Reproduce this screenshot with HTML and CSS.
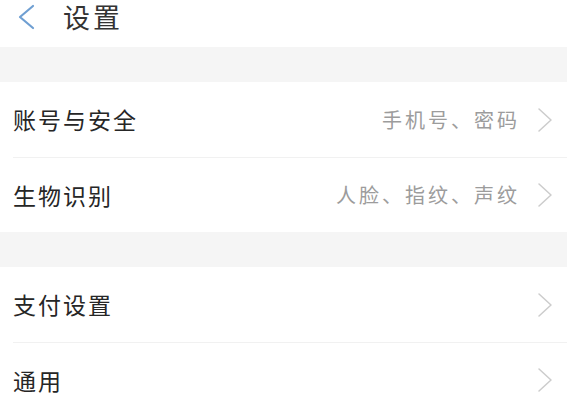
FILE: index.html
```html
<!DOCTYPE html>
<html lang="zh-CN">
<head>
<meta charset="utf-8">
<title>设置</title>
<link rel="stylesheet" href="styles.css">
</head>
<body>
<div class="page">
  <header class="header">
    <svg class="back" width="20" height="26" viewBox="0 0 20 26" aria-hidden="true">
      <path d="M17 2 L4 13 L17 24" fill="none" stroke="#6f9fd2" stroke-width="2.2" stroke-linecap="round" stroke-linejoin="round"/>
    </svg>
    <h1 class="title">设置</h1>
  </header>
  <div class="gap"></div>
  <section class="group">
    <div class="row">
      <span class="label">账号与安全</span>
      <span class="value">手机号、密码</span>
      <svg class="chev" width="16" height="26" viewBox="0 0 16 26" aria-hidden="true"><path d="M2 2 L14 13 L2 24" fill="none" stroke="#cccccc" stroke-width="1.5" stroke-linecap="round" stroke-linejoin="round"/></svg>
    </div>
    <div class="row">
      <span class="label">生物识别</span>
      <span class="value">人脸、指纹、声纹</span>
      <svg class="chev" width="16" height="26" viewBox="0 0 16 26" aria-hidden="true"><path d="M2 2 L14 13 L2 24" fill="none" stroke="#cccccc" stroke-width="1.5" stroke-linecap="round" stroke-linejoin="round"/></svg>
    </div>
  </section>
  <div class="gap"></div>
  <section class="group">
    <div class="row">
      <span class="label">支付设置</span>
      <span class="value"></span>
      <svg class="chev" width="16" height="26" viewBox="0 0 16 26" aria-hidden="true"><path d="M2 2 L14 13 L2 24" fill="none" stroke="#cccccc" stroke-width="1.5" stroke-linecap="round" stroke-linejoin="round"/></svg>
    </div>
    <div class="row">
      <span class="label">通用</span>
      <span class="value"></span>
      <svg class="chev" width="16" height="26" viewBox="0 0 16 26" aria-hidden="true"><path d="M2 2 L14 13 L2 24" fill="none" stroke="#cccccc" stroke-width="1.5" stroke-linecap="round" stroke-linejoin="round"/></svg>
    </div>
  </section>
</div>
</body>
</html>
```
FILE: styles.css
```css
html, body {
  margin: 0;
  padding: 0;
  background: #ffffff;
}
body {
  font-family: "Noto Sans CJK SC", "Noto Sans", sans-serif;
  color: #2a2a2a;
}
.page {
  width: 567px;
  min-height: 413px;
  overflow: hidden;
}
.header {
  height: 47px;
  box-sizing: border-box;
  display: flex;
  align-items: center;
  padding: 2px 0 16px 16px;
  gap: 27px;
}
.back {
  display: block;
  flex: none;
}
.title {
  margin: 0;
  font-size: 27px;
  font-weight: 400;
  letter-spacing: 3px;
  line-height: 29px;
  color: #333333;
}
.gap {
  height: 35px;
  background: #f5f5f5;
}
.group {
  background: #ffffff;
}
.row {
  height: 75px;
  box-sizing: border-box;
  margin-left: 13px;
  padding-right: 14px;
  display: flex;
  align-items: center;
}
.row + .row {
  border-top: 1px solid #f1f1f1;
}
.label {
  font-size: 23px;
  letter-spacing: 2px;
  color: #262626;
  line-height: 1;
}
.value {
  margin-left: auto;
  font-size: 20px;
  letter-spacing: 3px;
  color: #9c9c9c;
  line-height: 1;
  margin-right: 17px;
}
.chev {
  display: block;
  flex: none;
}
```
